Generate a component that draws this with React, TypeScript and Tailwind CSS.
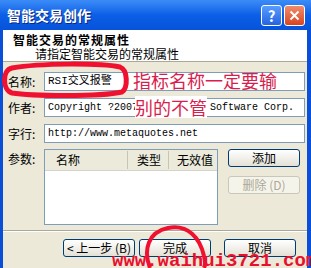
import React from "react";

const cjk = "font-['Tahoma','Noto_Sans_CJK_SC',sans-serif]";
const mono = "font-['Liberation_Mono','Noto_Sans_CJK_SC',monospace]";

function XpButton({
  children,
  disabled = false,
  className = "",
}: {
  children: React.ReactNode;
  disabled?: boolean;
  className?: string;
}) {
  return (
    <div
      className={[
        "flex h-[18px] w-[72px] items-center justify-center rounded-[3px] border text-[12px] leading-none",
        disabled
          ? "border-[#C9C7BA] bg-[#F5F4EA] text-[#ACA899]"
          : "border-[#003C74] bg-gradient-to-b from-white to-[#E3E1D6] text-black",
        className,
      ].join(" ")}
    >
      {children}
    </div>
  );
}

function Field({ label, children }: { label: string; children?: React.ReactNode }) {
  return (
    <div className="flex items-center">
      <span className="w-[36px] text-[12px]">{label}:</span>
      <div className="flex h-[19px] flex-1 items-center overflow-hidden whitespace-nowrap border border-[#7F9DB9] bg-white pl-[3px]">
        {children}
      </div>
    </div>
  );
}

export default function App() {
  return (
    <div className={`relative flex h-[268px] w-[311px] flex-col overflow-hidden bg-[#0A4FD8] ${cjk}`}>
      {/* title bar */}
      <div className="flex h-[30px] items-center justify-between bg-gradient-to-b from-[#3B8CF7] via-[#0B5FE6] to-[#0753DA] pl-[7px] pr-[6px]">
        <span className="text-[14px] font-bold text-white [text-shadow:1px_1px_0_#0A2A8A]">
          智能交易创作
        </span>
        <div className="flex gap-[2px]">
          <div className="flex h-[21px] w-[21px] items-center justify-center rounded-[3px] border border-white bg-gradient-to-b from-[#5A9BFF] to-[#2563E0] text-[15px] font-bold leading-none text-white">
            ?
          </div>
          <div className="flex h-[21px] w-[21px] items-center justify-center rounded-[3px] border border-white bg-gradient-to-b from-[#F08A6A] to-[#D8421C]">
            <svg width="11" height="11" viewBox="0 0 11 11">
              <path d="M1.5 1.5 L9.5 9.5 M9.5 1.5 L1.5 9.5" stroke="white" strokeWidth="2" />
            </svg>
          </div>
        </div>
      </div>

      {/* client area */}
      <div className="ml-[3px] mr-[4px] flex flex-1 flex-col bg-[#ECE9D8]">
        <div className="h-[32px] border-b border-[#ACA899] bg-white pl-[10px] pt-[2px]">
          <div className="text-[12px] font-bold leading-[15px] tracking-[1px]">智能交易的常规属性</div>
          <div className="pl-[22px] text-[12px] leading-[14px]">请指定智能交易的常规属性</div>
        </div>

        <div className="flex flex-col gap-[7px] pl-[5px] pr-[2px] pt-[10px]">
          <Field label="名称">
            <span className={`${mono} text-[11px]`}>RSI交叉报警</span>
          </Field>
          <Field label="作者">
            <span className={`${mono} text-[10px]`}>Copyright ?2007 MetaQuotes Software Corp.</span>
          </Field>
          <Field label="字行">
            <span className={`${mono} text-[10px]`}>http://www.metaquotes.net</span>
          </Field>
        </div>

        <div className="mt-[6px] flex pl-[5px] pr-[3px]">
          <span className="w-[36px] pt-[1px] text-[12px]">参数:</span>
          <div className="h-[76px] w-[174px] border border-[#7F9DB9] bg-white">
            <div className="flex h-[21px] items-center border-b border-[#D6D3CE] bg-[#EBEADB] text-[12px]">
              <span className="w-[83px] border-r border-[#C7C5B2] pl-[11px]">名称</span>
              <span className="w-[41px] border-r border-[#C7C5B2] pl-[9px]">类型</span>
              <span className="pl-[8px]">无效值</span>
            </div>
          </div>
          <div className="ml-[10px] flex flex-col gap-[9px]">
            <XpButton>添加</XpButton>
            <XpButton disabled>删除 (D)</XpButton>
          </div>
        </div>

        <div className="mt-[5px] border-b border-white border-t border-t-[#ACA899]" />

        <div className="flex pl-[60px] pt-[7px]">
          <XpButton>&lt; 上一步 (B)</XpButton>
          <XpButton className="ml-[4px]">完成</XpButton>
          <XpButton className="ml-[13px]">取消</XpButton>
        </div>
      </div>

      {/* red annotations drawn over the screenshot */}
      <svg className="pointer-events-none absolute left-0 top-0" width="311" height="268">
        <path
          d="M12 68 C40 63 100 63 120 67 C128 70 128 88 122 92 C100 97 30 96 12 93 C2 90 2 70 12 68 Z"
          fill="none"
          stroke="#F01030"
          strokeWidth="5"
        />
        <path
          d="M150 268 C143 250 148 232 168 228 C188 224 200 238 204 256 C206 264 204 268 204 268"
          fill="none"
          stroke="#F01030"
          strokeWidth="4"
        />
      </svg>
      <span className="absolute left-[133px] top-[69px] text-[18px] leading-[22px] text-[#D81E4E]">
        指标名称一定要输
      </span>
      <span className="absolute left-[135px] top-[96px] bg-white text-[18px] leading-[22px] text-[#D81E4E]">
        别的不管
      </span>
      <span className="absolute left-[112px] top-[250px] font-['Liberation_Mono',monospace] text-[19px] font-bold leading-[22px] text-[#E8102E]">
        www.waihui3721.com
      </span>
    </div>
  );
}
